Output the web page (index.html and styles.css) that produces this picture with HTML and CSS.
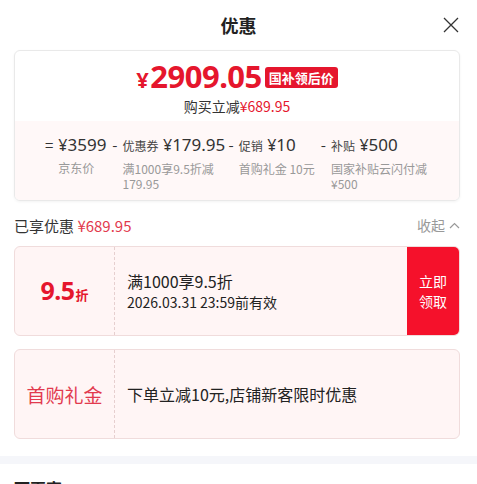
FILE: index.html
```html
<!DOCTYPE html>
<html lang="zh-CN">
<head>
    <meta charset="UTF-8">
    <meta name="viewport" content="width=device-width, initial-scale=1.0">
    <title>优惠</title>
    <link rel="stylesheet" href="styles.css">
</head>
<body>
    <div class="header">
        <h1 class="title">优惠</h1>
        <svg class="close" width="16" height="16" viewBox="0 0 16 16">
            <path d="M1 1 L15 15 M15 1 L1 15" stroke="#333" stroke-width="1.3" fill="none"/>
        </svg>
    </div>

    <div class="page">
        <div class="summary-card">
            <div class="summary-top">
                <div class="price-line">
                    <span class="price"><span class="yen">¥</span>2909.05</span>
                    <span class="badge">国补领后价</span>
                </div>
                <div class="save-line">购买立减<span class="red">¥689.95</span></div>
            </div>
            <div class="summary-bottom">
                <span class="op">=</span>
                <div class="col col-1">
                    <div class="val"><span class="yen-s">¥</span>3599</div>
                    <div class="lbl">京东价</div>
                </div>
                <span class="op">-</span>
                <div class="col col-2">
                    <div class="val"><span class="tag">优惠券</span> <span class="yen-s">¥</span>179.95</div>
                    <div class="lbl">满1000享9.5折减179.95</div>
                </div>
                <span class="op">-</span>
                <div class="col col-3">
                    <div class="val"><span class="tag">促销</span> <span class="yen-s">¥</span>10</div>
                    <div class="lbl">首购礼金 10元</div>
                </div>
                <span class="op">-</span>
                <div class="col col-4">
                    <div class="val"><span class="tag">补贴</span> <span class="yen-s">¥</span>500</div>
                    <div class="lbl">国家补贴云闪付减¥500</div>
                </div>
            </div>
        </div>

        <div class="enjoyed">
            <div>已享优惠 <span class="red-soft">¥689.95</span></div>
            <div class="fold">收起
                <svg width="11" height="7" viewBox="0 0 11 7"><path d="M1 6 L5.5 1.5 L10 6" stroke="#999" stroke-width="1.2" fill="none"/></svg>
            </div>
        </div>

        <div class="coupon">
            <div class="coupon-left">
                <span class="discount">9.5</span><span class="discount-unit">折</span>
            </div>
            <div class="coupon-body">
                <div class="coupon-title">满1000享9.5折</div>
                <div class="coupon-date">2026.03.31 23:59前有效</div>
            </div>
            <div class="coupon-btn">立即<br>领取</div>
        </div>

        <div class="coupon">
            <div class="coupon-left">
                <span class="gift">首购礼金</span>
            </div>
            <div class="coupon-body">
                <div class="coupon-title">下单立减10元,店铺新客限时优惠</div>
            </div>
        </div>
    </div>

    <div class="divider"></div>
    <div class="more">可再享</div>
</body>
</html>
```

FILE: styles.css
```css
body {
    margin: 0;
    padding: 0;
    background: #fff;
    color: #222;
    font-family: "Noto Sans CJK SC", "Noto Sans", sans-serif;
}
.header {
    position: relative;
    height: 50px;
    display: flex;
    align-items: center;
    justify-content: center;
}
.title {
    margin: 0;
    font-size: 18px;
    font-weight: bold;
    color: #222;
}
.close {
    position: absolute;
    right: 18px;
    top: 17px;
}
.page {
    padding: 0 17px 0 14px;
}
.summary-card {
    border: 1px solid #e9e9e9;
    border-radius: 6px;
    overflow: hidden;
    box-shadow: 0 1px 3px rgba(0, 0, 0, 0.05);
}
.summary-top {
    height: 70px;
    display: flex;
    flex-direction: column;
    align-items: center;
    justify-content: flex-end;
    padding-bottom: 4px;
    box-sizing: border-box;
}
.price-line {
    display: flex;
    align-items: center;
    height: 36px;
}
.price {
    color: #e5162d;
    font-family: "Noto Sans", sans-serif;
    font-size: 31px;
    font-weight: bold;
    letter-spacing: -0.5px;
    line-height: 36px;
}
.price .yen {
    font-size: 22px;
    margin-right: 2px;
}
.badge {
    margin-left: 3px;
    background: #e5162d;
    color: #fff;
    font-size: 13px;
    font-weight: bold;
    padding: 0 4px;
    height: 21px;
    line-height: 21px;
    border-radius: 3px;
}
.save-line {
    font-size: 14px;
    line-height: 22px;
    color: #333;
}
.red {
    color: #e5162d;
}
.red-soft {
    color: #e23a4e;
}
.summary-bottom {
    height: 79px;
    box-sizing: border-box;
    background: #fff8f8;
    display: flex;
    align-items: flex-start;
    padding: 12px 0 0 30px;
}
.op {
    font-size: 15px;
    line-height: 24px;
    color: #333;
    margin-right: 5px;
}
.col {
    margin-right: 6px;
}
.col-1 { width: 48px; }
.col-2 { width: 100px; margin-right: 6px; }
.col-3 { width: 78px; margin-right: 4px; }
.col-4 { width: 98px; }
.val {
    font-family: "Noto Sans", "Noto Sans CJK SC", sans-serif;
    font-size: 17px;
    line-height: 24px;
    color: #333;
    white-space: nowrap;
}
.yen-s {
    font-size: 16px;
}
.tag {
    font-family: "Noto Sans CJK SC", sans-serif;
    font-size: 12px;
    color: #444;
}
.lbl {
    margin-top: 3px;
    font-size: 12px;
    line-height: 15px;
    color: #999;
}
.enjoyed {
    display: flex;
    justify-content: space-between;
    align-items: center;
    font-size: 15px;
    color: #333;
    height: 22px;
    margin: 13px 0 10px;
}
.fold {
    color: #999;
    font-size: 14px;
    display: flex;
    align-items: center;
    gap: 4px;
}
.coupon {
    display: flex;
    height: 90px;
    background: #fff5f5;
    border: 1px solid #f0dcdc;
    border-radius: 6px;
    box-sizing: border-box;
    margin-bottom: 13px;
    overflow: hidden;
}
.coupon-left {
    width: 100px;
    flex-shrink: 0;
    display: flex;
    align-items: baseline;
    justify-content: center;
    align-self: stretch;
    padding-top: 26px;
    box-sizing: border-box;
    border-right: 1px dashed #e6cfcf;
}
.discount {
    font-family: "Noto Sans", sans-serif;
    font-size: 25px;
    font-weight: bold;
    color: #e5162d;
    letter-spacing: -0.5px;
}
.discount-unit {
    font-size: 13px;
    font-weight: bold;
    color: #e5162d;
    margin-left: 1px;
}
.gift {
    font-size: 19px;
    color: #e23a4e;
    line-height: 30px;
    margin-top: 4px;
}
.coupon-body {
    flex: 1;
    padding-left: 12px;
    display: flex;
    flex-direction: column;
    justify-content: center;
}
.coupon-title {
    font-size: 16px;
    line-height: 22px;
    color: #222;
}
.coupon-date {
    font-size: 14px;
    line-height: 20px;
    color: #222;
}
.coupon-btn {
    width: 52px;
    flex-shrink: 0;
    background: #f5112b;
    color: #fff;
    font-size: 14px;
    line-height: 20px;
    display: flex;
    align-items: center;
    justify-content: center;
    text-align: center;
}
.divider {
    height: 8px;
    background: #f5f6fa;
    margin-top: 17px;
}
.more {
    padding: 12px 14px 0;
    font-size: 16px;
    font-weight: bold;
    color: #222;
}
```
